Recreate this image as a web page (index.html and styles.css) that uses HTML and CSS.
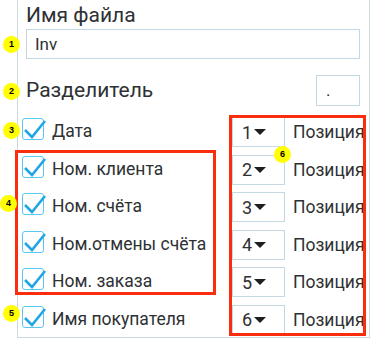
FILE: index.html
```html
<!DOCTYPE html>
<html lang="ru">
<head>
    <meta charset="UTF-8">
    <meta name="viewport" content="width=device-width, initial-scale=1.0">
    <title>Экспорт</title>
    <link rel="stylesheet" href="styles.css">
</head>
<body>
    <div class="panel">
        <div class="field-label">Имя файла</div>
        <div class="text-input">Inv</div>
        <div class="sep-row">
            <span class="field-label">Разделитель</span>
            <div class="sep-input">.</div>
        </div>
        <div class="rows">
            <div class="row">
                <label class="check"><span class="box"><svg viewBox="0 0 24 24"><path d="M3 13 L10 20 L23 4"/></svg></span><span>Дата</span></label>
                <div class="pos"><div class="select">1<span class="caret"></span></div><span>Позиция</span></div>
            </div>
            <div class="row">
                <label class="check"><span class="box"><svg viewBox="0 0 24 24"><path d="M3 13 L10 20 L23 4"/></svg></span><span>Ном. клиента</span></label>
                <div class="pos"><div class="select">2<span class="caret"></span></div><span>Позиция</span></div>
            </div>
            <div class="row">
                <label class="check"><span class="box"><svg viewBox="0 0 24 24"><path d="M3 13 L10 20 L23 4"/></svg></span><span>Ном. счёта</span></label>
                <div class="pos"><div class="select">3<span class="caret"></span></div><span>Позиция</span></div>
            </div>
            <div class="row">
                <label class="check"><span class="box"><svg viewBox="0 0 24 24"><path d="M3 13 L10 20 L23 4"/></svg></span><span>Ном.отмены счёта</span></label>
                <div class="pos"><div class="select">4<span class="caret"></span></div><span>Позиция</span></div>
            </div>
            <div class="row">
                <label class="check"><span class="box"><svg viewBox="0 0 24 24"><path d="M3 13 L10 20 L23 4"/></svg></span><span>Ном. заказа</span></label>
                <div class="pos"><div class="select">5<span class="caret"></span></div><span>Позиция</span></div>
            </div>
            <div class="row">
                <label class="check"><span class="box"><svg viewBox="0 0 24 24"><path d="M3 13 L10 20 L23 4"/></svg></span><span>Имя покупателя</span></label>
                <div class="pos"><div class="select">6<span class="caret"></span></div><span>Позиция</span></div>
            </div>
        </div>
    </div>

    <!-- annotations -->
    <div class="mark mark-left"></div>
    <div class="mark mark-right"></div>
    <span class="badge b1">1</span>
    <span class="badge b2">2</span>
    <span class="badge b3">3</span>
    <span class="badge b4">4</span>
    <span class="badge b5">5</span>
    <span class="badge b6">6</span>
</body>
</html>
```

FILE: styles.css
```css
body {
    margin: 0;
    font-family: Roboto, "Noto Sans", sans-serif;
    color: #2e3133;
    background: #ffffff;
    position: relative;
    height: 345px;
    overflow: hidden;
}

.panel {
    margin-left: 17px;
    width: 353px;
    height: 338px;
    border: 1px solid #cbd9e0;
    border-top: none;
    padding: 3px 9px 0 8px;
    box-sizing: border-box;
    overflow: hidden;
}

.field-label {
    font-size: 21px;
    line-height: 25px;
    display: block;
}

.text-input {
    margin-top: 1px;
    height: 30px;
    border: 1px solid #c3d8e2;
    box-sizing: border-box;
    font-size: 17px;
    line-height: 28px;
    padding-left: 8px;
}

.sep-row {
    margin-top: 16px;
    height: 31px;
    display: flex;
    align-items: center;
    justify-content: space-between;
}

.sep-input {
    width: 44px;
    height: 31px;
    border: 1px solid #c3d8e2;
    box-sizing: border-box;
    font-size: 17px;
    line-height: 29px;
    padding-left: 9px;
}

.rows {
    margin-top: 11px;
    margin-left: -4px;
    display: flex;
    flex-direction: column;
    gap: 7.5px;
}

.row {
    height: 30px;
    display: flex;
    align-items: center;
    justify-content: space-between;
}

.check {
    display: flex;
    align-items: center;
    gap: 8px;
    font-size: 17.5px;
}

.check span:last-child {
    padding-bottom: 2px;
}

.box {
    width: 22px;
    height: 22px;
    border: 1.5px solid #5cc6f2;
    border-radius: 3px;
    box-sizing: border-box;
    margin-bottom: 6px;
    position: relative;
}

.box svg {
    position: absolute;
    left: -1px;
    top: -2px;
    width: 24px;
    height: 24px;
    fill: none;
    stroke: #21a5e3;
    stroke-width: 2.6;
}

.pos {
    width: 128px;
    display: flex;
    align-items: center;
    gap: 8px;
    font-size: 17.5px;
    white-space: nowrap;
    flex-shrink: 0;
}

.select {
    width: 53px;
    height: 30px;
    border: 1px solid #c3d8e2;
    box-sizing: border-box;
    display: flex;
    align-items: center;
    padding-left: 9px;
    font-size: 18px;
    flex-shrink: 0;
}

.caret {
    margin-left: 2px;
    width: 0;
    height: 0;
    border-left: 6px solid transparent;
    border-right: 6px solid transparent;
    border-top: 6px solid #1f1f1f;
}

.mark {
    position: absolute;
    border: 3px solid #fb2d0f;
    box-sizing: border-box;
}

.mark-left {
    left: 15px;
    top: 150px;
    width: 201px;
    height: 145px;
}

.mark-right {
    left: 229px;
    top: 115px;
    width: 137px;
    height: 221px;
}

.badge {
    position: absolute;
    width: 17px;
    height: 17px;
    border-radius: 50%;
    background: #ffff00;
    font-family: "Liberation Sans", Arial, sans-serif;
    font-weight: bold;
    font-size: 9px;
    line-height: 17px;
    text-align: center;
    color: #000000;
}

.b1 { left: 3px; top: 36px; }
.b2 { left: 3px; top: 83px; }
.b3 { left: 3px; top: 122px; }
.b4 { left: 0px; top: 195px; }
.b5 { left: 3px; top: 305px; }
.b6 { left: 274px; top: 146px; }
```
